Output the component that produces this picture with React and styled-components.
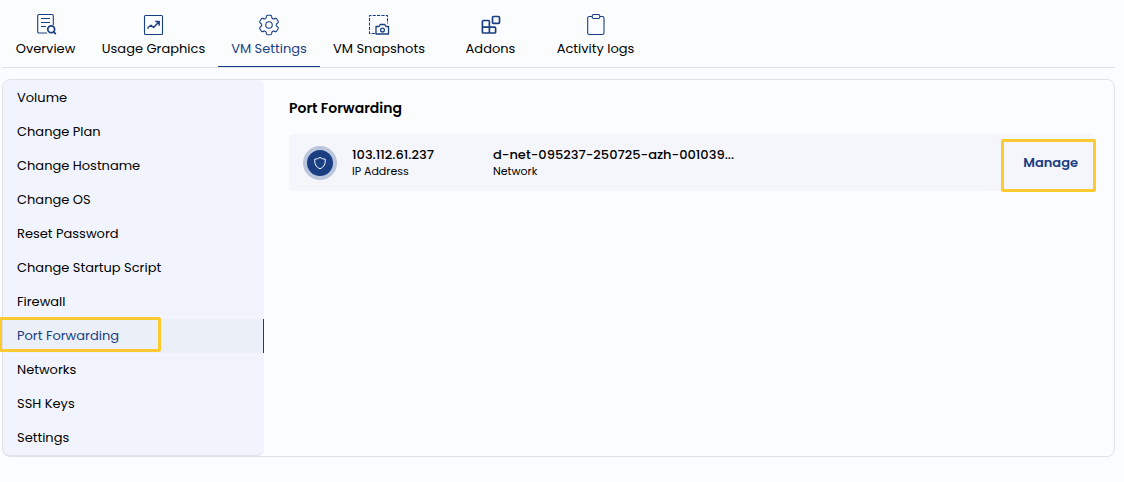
import React from "react";
import styled, { createGlobalStyle, css } from "styled-components";
import { HiOutlineCog6Tooth } from "react-icons/hi2";

const navy = "#1a3e82";
const line = "#dfe1e6";
const highlight = "#ffca2f";

const GlobalStyle = createGlobalStyle`
  *, *::before, *::after { box-sizing: border-box; }
  body {
    margin: 0;
    background: #fbfcfe;
    color: #000;
    font-family: Poppins, Inter, "Liberation Sans", sans-serif;
    font-size: 13px;
    line-height: 20px;
  }
`;

const Page = styled.div`
  padding: 0 9px 24px 2px;
`;

const TabBar = styled.nav`
  display: flex;
  height: 68px;
  margin-bottom: 11px;
  border-bottom: 1px solid ${line};
`;

const Tab = styled.a`
  display: flex;
  flex-direction: column;
  align-items: center;
  flex: 0 0 ${(p) => p.$width}px;
  gap: 3px;
  padding-top: 12px;
  white-space: nowrap;
  text-decoration: none;
  color: ${(p) => (p.$active ? navy : "#000")};
  border-bottom: 1px solid ${(p) => (p.$active ? navy : "transparent")};
`;

const TabIcon = styled.svg`
  width: 24px;
  height: 24px;
  color: ${navy};
  fill: none;
  stroke: ${navy};
  stroke-width: 1.1;
  stroke-linejoin: round;
`;

const Panel = styled.section`
  display: flex;
  border: 1px solid ${line};
  border-radius: 8px;
`;

const SideMenu = styled.nav`
  flex: 0 0 261px;
  padding-top: 1px;
  background: #f1f4fc;
  border-bottom: 1px solid ${line};
  border-radius: 7px;
`;

const marked = css`
  position: relative;
  &::after {
    content: "";
    position: absolute;
    border: 3px solid ${highlight};
    border-radius: 2px;
    pointer-events: none;
  }
`;

const MenuItem = styled.a`
  display: flex;
  align-items: center;
  height: 34px;
  padding: 0 14px;
  text-decoration: none;
  color: ${(p) => (p.$active ? navy : "#000")};
  ${(p) =>
    p.$active &&
    css`
      ${marked}
      background: #ebeff8;
      border-right: 1px solid ${navy};
      &::after {
        inset: -2px auto 1px -4px;
        width: 162px;
      }
    `}
`;

const Content = styled.main`
  flex: 1;
  min-width: 0;
  padding: 18px 20px 18px 25px;
`;

const Title = styled.h1`
  margin: 0 0 16px;
  font-size: 14px;
  font-weight: 600;
  line-height: 20px;
`;

const NetworkRow = styled.article`
  display: flex;
  align-items: center;
  height: 57px;
  padding-left: 14px;
  background: #f5f6fb;
  border-radius: 4px;
`;

const Badge = styled.span`
  display: grid;
  place-items: center;
  flex: 0 0 34px;
  height: 34px;
  margin-right: 15px;
  border: 4px solid #bbc6dc;
  border-radius: 50%;
  background: ${navy};
`;

const Field = styled.div`
  flex: 0 0 ${(p) => p.$width}px;
  min-width: 0;
`;

const Value = styled.div`
  font-weight: 500;
  line-height: 17px;
  white-space: nowrap;
`;

const Caption = styled.div`
  font-size: 11px;
  line-height: 16px;
`;

const ManageButton = styled.button`
  ${marked}
  align-self: stretch;
  margin-left: auto;
  padding: 0 16px 0 24px;
  border: 0;
  background: none;
  color: ${navy};
  font: inherit;
  font-weight: 600;
  cursor: pointer;
  &::after {
    inset: 5px -2px -1px auto;
    width: 95px;
  }
`;

const icons = {
  overview: (
    <>
      <path d="M13 21H5a1.300 1.300 0 0 1-1.300-1.300V3.800A1.300 1.300 0 0 1 5 2.500h13A1.300 1.300 0 0 1 19.300 3.800v9.500" />
      <path d="M7 6.500h9M7 10.500h9M7 14.500h5" />
      <circle cx="17.200" cy="17.300" r="3.400" strokeWidth="1.700" />
      <path d="m19.600 19.900 2.200 2.200" strokeWidth="1.700" />
    </>
  ),
  usage: (
    <>
      <rect x="2.500" y="3.500" width="18" height="19" rx="1" />
      <path d="M6 16.800v-1.300l3-2.300 2.600 2.300 5.600-6M13.200 9.500h4v4.200" strokeWidth="1.400" />
    </>
  ),
  settings: <HiOutlineCog6Tooth x="-1" y="0" size={26} strokeWidth="1" />,
  snapshots: (
    <>
      <path d="M7.800 21.500H2.500V3.500h18v8" strokeDasharray="3.200 1.200" />
      <path d="M9 14.500h3l1.200-2h4.600l1.200 2h2.500v7.500H9z" strokeWidth="1.300" />
      <circle cx="15.500" cy="18" r="1.900" strokeWidth="1.300" />
    </>
  ),
  addons: (
    <g strokeWidth="1.700">
      <path d="M4.400 8.500h5a1 1 0 0 1 1 1v5.700h5.200a1 1 0 0 1 1 1V20a1 1 0 0 1-1 1H4.400a1 1 0 0 1-1-1V9.500a1 1 0 0 1 1-1zM3.400 15.200h7V21" />
      <rect x="13.500" y="4.500" width="7" height="6.800" rx="1" />
    </g>
  ),
  logs: (
    <>
      <path d="M8.200 4.500H5.300A1.600 1.600 0 0 0 3.700 6.100v14.800a1.600 1.600 0 0 0 1.600 1.600h13.100a1.600 1.600 0 0 0 1.600-1.600V6.100a1.600 1.600 0 0 0-1.600-1.600h-2.600" />
      <rect x="8.200" y="2.500" width="7.600" height="4" rx="1.500" />
    </>
  ),
};

const tabs = [
  { label: "Overview", icon: "overview", width: 87 },
  { label: "Usage Graphics", icon: "usage", width: 129 },
  { label: "VM Settings", icon: "settings", width: 102, active: true },
  { label: "VM Snapshots", icon: "snapshots", width: 118 },
  { label: "Addons", icon: "addons", width: 105 },
  { label: "Activity logs", icon: "logs", width: 105 },
];

const menu = [
  "Volume",
  "Change Plan",
  "Change Hostname",
  "Change OS",
  "Reset Password",
  "Change Startup Script",
  "Firewall",
  "Port Forwarding",
  "Networks",
  "SSH Keys",
  "Settings",
];

export default function App() {
  return (
    <>
      <GlobalStyle />
      <Page>
        <TabBar>
          {tabs.map((t) => (
            <Tab key={t.label} href="#" $width={t.width} $active={t.active}>
              <TabIcon viewBox="0 0 24 24" aria-hidden="true">
                {icons[t.icon]}
              </TabIcon>
              {t.label}
            </Tab>
          ))}
        </TabBar>
        <Panel>
          <SideMenu>
            {menu.map((label) => (
              <MenuItem key={label} href="#" $active={label === "Port Forwarding"}>
                {label}
              </MenuItem>
            ))}
          </SideMenu>
          <Content>
            <Title>Port Forwarding</Title>
            <NetworkRow>
              <Badge>
                <svg width="14" height="14" viewBox="0 0 14 14" fill="none" stroke="#fff" strokeWidth="1" strokeLinejoin="round" aria-hidden="true">
                  <path d="M7 1.300C5.500 2.600 3.600 3.100 1.800 3.100c-.3 4.500 1 8 5.200 9.600 4.200-1.600 5.500-5.100 5.200-9.600C10.400 3.100 8.500 2.600 7 1.300z" />
                </svg>
              </Badge>
              <Field $width={141}>
                <Value>103.112.61.237</Value>
                <Caption>IP Address</Caption>
              </Field>
              <Field $width={240}>
                <Value>d-net-095237-250725-azh-001039...</Value>
                <Caption>Network</Caption>
              </Field>
              <ManageButton type="button">Manage</ManageButton>
            </NetworkRow>
          </Content>
        </Panel>
      </Page>
    </>
  );
}
